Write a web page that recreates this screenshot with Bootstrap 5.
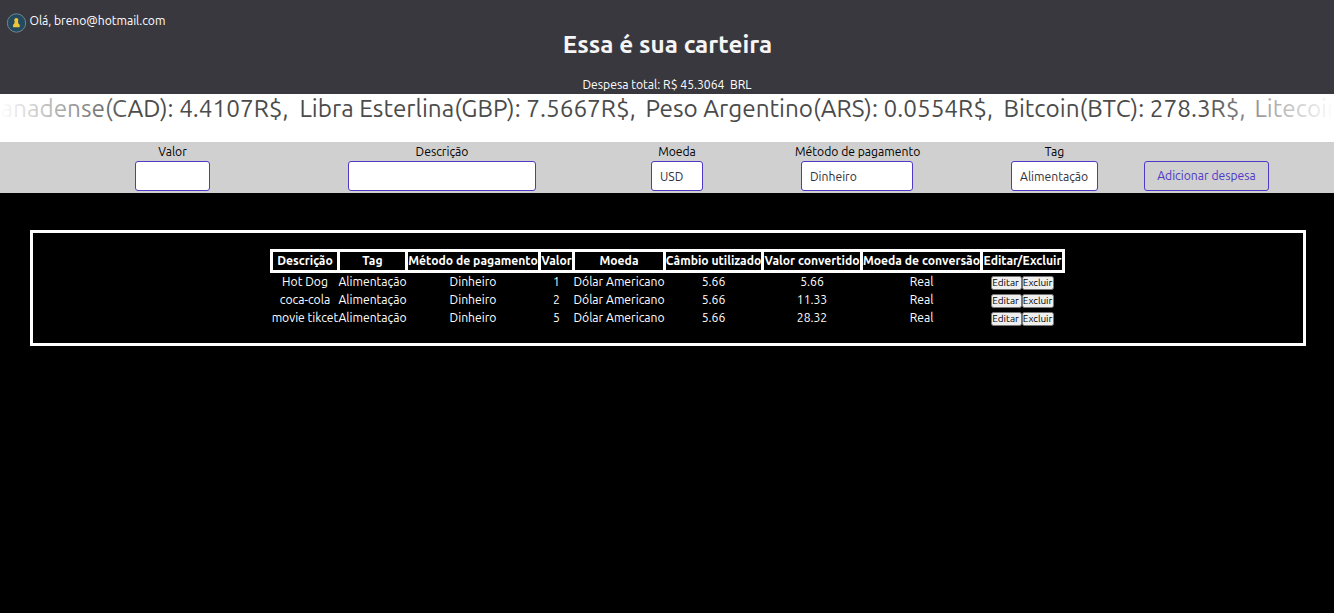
<!DOCTYPE html>
<html lang="pt-BR">
<head>
<meta charset="utf-8">
<meta name="viewport" content="width=device-width, initial-scale=1">
<title>Carteira</title>
<link href="https://cdn.jsdelivr.net/npm/bootstrap@5.3.0/dist/css/bootstrap.min.css" rel="stylesheet">
<style>
body{background:#000;color:#fff;font:400 12.16px/18px Ubuntu,"Noto Sans",sans-serif;overflow:hidden}
.wallet-head{height:94px;background:#3a383f;color:#fff}
.user-line{padding:12px 0 0 7px;height:32px}
.user-line svg{margin:1px 2.5px 0 0}
.user-mail{letter-spacing:-.03px}
.wallet-title{font-size:24.32px;line-height:28px;font-weight:700;margin:-2px 0 0 1px;color:#f5f5f5}
.wallet-total{margin-top:18px;white-space:pre}
.ticker{height:48px;background:#fff;color:#4b4b4b;font-size:24.3px;line-height:29px;position:relative}
.ticker span{flex:none;white-space:pre}
.ticker::before,.ticker::after{content:"";position:absolute;top:0;bottom:0;width:133px}
.ticker::before{left:0;background:linear-gradient(to right,#fff,#fff0)}
.ticker::after{right:0;background:linear-gradient(to left,#fff,#fff0)}
.tk-cad{width:299.5px;padding-right:11px}
.tk-gbp{width:346px}
.tk-ars{width:358px}
.tk-btc{width:251px}
.expense-form{height:51px;background:#d0d0d0;color:#000;padding-left:135px}
.field{flex:none}
.field label{display:block;line-height:19px;height:19px;text-align:center;white-space:nowrap}
.field .form-control{height:30px;padding:1px 8px 0;border:1px solid #4f39c6;border-radius:3px;font-size:12.16px;line-height:28px;margin:0 auto;color:#323238;background:#fff;appearance:none}
.w-valor{width:75px;margin-right:138px}.w-desc{width:188px;margin-right:115px}.w-moeda{width:52px;margin-right:92px}
.w-metodo{width:124px;margin-right:92px}.w-metodo .form-control{width:112px}
.w-tag{width:87px;margin-right:46px}
.btn-add{width:125px;height:30px;margin-top:19px;padding:0;border:1px solid #4f39c6;border-radius:3px;color:#4f39c6;font-size:12.16px;line-height:26px}
.expense-box{margin:37px 28px 0 30px;height:116px;border:3px solid #fff;padding-top:16px}
.expense-table{width:795px;table-layout:fixed;border-collapse:collapse;text-align:center;margin:0 auto 0 237px;white-space:nowrap}
.expense-table th{border:3px solid #fff;padding:0;height:21px;line-height:17px}
.expense-table td{padding:0;height:18px;line-height:17px}
.expense-table th>span,.expense-table td>span{display:block;margin:0 -8px}
.expense-table th>span{margin-top:-1px;margin-bottom:1px}
.row-btn{display:inline-block;height:14px;vertical-align:top;margin-top:3px;padding:0;border:1px solid #767676;border-radius:2.5px;background:#efefef;color:#000;font-size:10px;line-height:12px}
.row-btn.edit{width:31px;text-indent:-2px}.row-btn.del{width:32px;text-indent:-1px;letter-spacing:-.05px}
</style>
</head>
<body>
<header class="wallet-head">
  <div class="user-line d-flex">
    <svg width="20" height="20" viewBox="0 0 20 20"><circle cx="9.5" cy="10" r="9.2" fill="#234a5f" stroke="#71848e" stroke-width="1"/><circle cx="9.3" cy="7" r="2.1" fill="#efc436"/><path d="M7.8 8h3.1l.5 2.6 1.3 1.2v2.4H6.1v-2.4l1.2-1.2z" fill="#efc436"/></svg>
    <span class="user-mail">Olá, breno@hotmail.com</span>
  </div>
  <h1 class="wallet-title text-center">Essa é sua carteira</h1>
  <div class="wallet-total text-center">Despesa total: R$ 45.3064  BRL</div>
</header>
<div class="ticker d-flex overflow-hidden">
  <span class="tk-cad d-flex justify-content-end">Dólar Canadense(CAD): 4.4107R$,</span>
  <span class="tk-gbp">Libra Esterlina(GBP): 7.5667R$,</span>
  <span class="tk-ars">Peso Argentino(ARS): 0.0554R$,</span>
  <span class="tk-btc">Bitcoin(BTC): 278.3R$,</span>
  <span>Litecoin</span>
</div>
<form class="expense-form d-flex align-items-start">
  <div class="field w-valor"><label for="valor">Valor</label><input id="valor" class="form-control"></div>
  <div class="field w-desc"><label for="desc">Descrição</label><input id="desc" class="form-control"></div>
  <div class="field w-moeda"><label for="moeda">Moeda</label><select id="moeda" class="form-control"><option>USD</option></select></div>
  <div class="field w-metodo"><label for="metodo">Método de pagamento</label><select id="metodo" class="form-control"><option>Dinheiro</option></select></div>
  <div class="field w-tag"><label for="tag">Tag</label><select id="tag" class="form-control"><option>Alimentação</option></select></div>
  <button type="button" class="btn btn-add">Adicionar despesa</button>
</form>
<main class="expense-box">
  <table class="expense-table">
    <colgroup><col style="width:67px"><col style="width:68px"><col style="width:133px"><col style="width:34px"><col style="width:91px"><col style="width:98px"><col style="width:99px"><col style="width:120px"><col style="width:82px"></colgroup>
    <thead><tr><th><span>Descrição</span></th><th><span>Tag</span></th><th><span>Método de pagamento</span></th><th><span>Valor</span></th><th><span>Moeda</span></th><th><span>Câmbio utilizado</span></th><th><span>Valor convertido</span></th><th><span>Moeda de conversão</span></th><th><span>Editar/Excluir</span></th></tr></thead>
    <tbody>
      <tr><td><span>Hot Dog</span></td><td><span>Alimentação</span></td><td>Dinheiro</td><td>1</td><td><span>Dólar Americano</span></td><td>5.66</td><td>5.66</td><td>Real</td><td><button class="row-btn edit">Editar</button><button class="row-btn del">Excluir</button></td></tr>
      <tr><td><span>coca-cola</span></td><td><span>Alimentação</span></td><td>Dinheiro</td><td>2</td><td><span>Dólar Americano</span></td><td>5.66</td><td>11.33</td><td>Real</td><td><button class="row-btn edit">Editar</button><button class="row-btn del">Excluir</button></td></tr>
      <tr><td><span>movie tikcet</span></td><td><span>Alimentação</span></td><td>Dinheiro</td><td>5</td><td><span>Dólar Americano</span></td><td>5.66</td><td>28.32</td><td>Real</td><td><button class="row-btn edit">Editar</button><button class="row-btn del">Excluir</button></td></tr>
    </tbody>
  </table>
</main>
<script src="https://cdn.jsdelivr.net/npm/bootstrap@5.3.0/dist/js/bootstrap.bundle.min.js"></script>
</body>
</html>
